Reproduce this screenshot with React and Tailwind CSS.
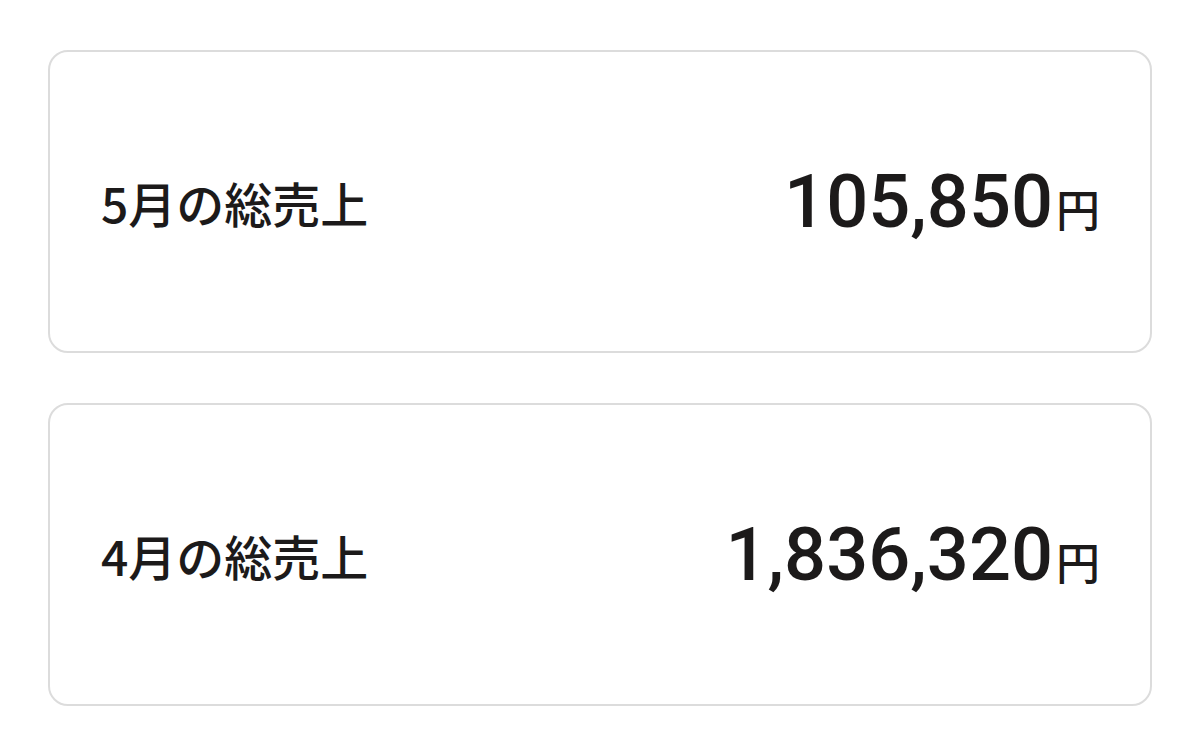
import React from "react";

const rows = [
  { label: "5月の総売上", amount: "105,850" },
  { label: "4月の総売上", amount: "1,836,320" },
];

function SalesCard({ label, amount }) {
  return (
    <div className="flex h-[303px] items-center justify-between rounded-[20px] border-2 border-[#dcdcdc] bg-white pl-[51px] pr-[50px]">
      <span
        className="text-[48px] font-medium leading-none text-[#1c1a1a]"
        style={{ fontFamily: '"Noto Sans CJK JP", sans-serif' }}
      >
        {label}
      </span>
      <span className="flex items-baseline text-[#1c1a1a]">
        <span
          className="text-[74px] font-medium leading-none"
          style={{ fontFamily: 'Roboto, "Noto Sans CJK JP", sans-serif' }}
        >
          {amount}
        </span>
        <span
          className="ml-[3px] text-[44px] font-medium leading-none"
          style={{ fontFamily: '"Noto Sans CJK JP", sans-serif' }}
        >
          円
        </span>
      </span>
    </div>
  );
}

export default function App() {
  return (
    <div className="min-h-[750px] w-[1200px] bg-white px-[48px] pt-[50px]">
      <div className="flex flex-col gap-[50px]">
        {rows.map((r) => (
          <SalesCard key={r.label} {...r} />
        ))}
      </div>
    </div>
  );
}
